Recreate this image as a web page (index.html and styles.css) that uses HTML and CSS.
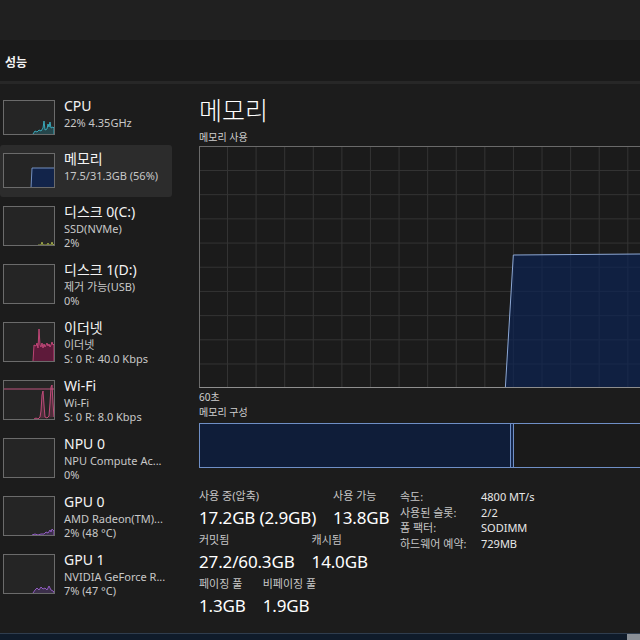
FILE: index.html
```html
<!DOCTYPE html>
<html lang="ko">
<head>
<meta charset="utf-8">
<title>작업 관리자 - 성능</title>
<link rel="stylesheet" href="styles.css">
</head>
<body>
<div class="titlebar"></div>
<div class="header"><span class="header-title">성능</span></div>
<div class="main">
  <nav class="sidebar">
    <div class="item i2">
      <div class="thumb t2">
        <svg viewBox="0 0 50 33" preserveAspectRatio="none"><polyline class="cpu" points="29,33 31,30 33,31 35,29 37,30 39,27 40,20 41,29 43,28 44,23 45,26 46,21 47,27 49,26 50,27 50,33"/></svg>
      </div>
      <div class="text"><div class="title">CPU</div><div class="sub">22% 4.35GHz</div></div>
    </div>
    <div class="item i2 selected">
      <div class="thumb t2">
        <svg viewBox="0 0 50 33" preserveAspectRatio="none"><polygon class="mem" points="27,34 28,14 51,14 51,34"/></svg>
      </div>
      <div class="text"><div class="title">메모리</div><div class="sub">17.5/31.3GB (56%)</div></div>
    </div>
    <div class="item i3">
      <div class="thumb t3">
        <svg viewBox="0 0 50 38" preserveAspectRatio="none"><polyline class="disk" points="34,38 37,38 38,35 39,38 43,38 44,36 45,38 47,38 48,35 49,38 50,37"/></svg>
      </div>
      <div class="text"><div class="title">디스크 0(C:)</div><div class="sub">SSD(NVMe)</div><div class="sub">2%</div></div>
    </div>
    <div class="item i3">
      <div class="thumb t3"></div>
      <div class="text"><div class="title">디스크 1(D:)</div><div class="sub">제거 가능(USB)</div><div class="sub">0%</div></div>
    </div>
    <div class="item i3">
      <div class="thumb t3">
        <svg viewBox="0 0 50 38" preserveAspectRatio="none"><polyline class="eth" points="29,38 30,22 32,23 33,20 34,25 35,6 36,22 37,24 38,20 39,25 40,21 41,24 42,22 43,20 44,23 45,21 46,24 47,22 48,19 49,22 50,21 50,38"/></svg>
      </div>
      <div class="text"><div class="title">이더넷</div><div class="sub">이더넷</div><div class="sub">S: 0 R: 40.0 Kbps</div></div>
    </div>
    <div class="item i3">
      <div class="thumb t3">
        <svg viewBox="0 0 50 38" preserveAspectRatio="none"><line class="wifi-line" x1="0" y1="8" x2="50" y2="8"/><polyline class="wifi" points="30,38 32,37 34,38 36,36 37,30 38,14 39,10 40,24 41,36 43,37 45,35 46,22 47,6 48,4 49,22 50,36"/></svg>
      </div>
      <div class="text"><div class="title">Wi-Fi</div><div class="sub">Wi-Fi</div><div class="sub">S: 0 R: 8.0 Kbps</div></div>
    </div>
    <div class="item i3">
      <div class="thumb t3"></div>
      <div class="text"><div class="title">NPU 0</div><div class="sub">NPU Compute Ac...</div><div class="sub">0%</div></div>
    </div>
    <div class="item i3">
      <div class="thumb t3">
        <svg viewBox="0 0 50 38" preserveAspectRatio="none"><polyline class="gpu" points="28,38 31,37 34,38 37,37 40,37 42,35 44,36 46,33 47,35 48,32 50,34 50,38"/></svg>
      </div>
      <div class="text"><div class="title">GPU 0</div><div class="sub">AMD Radeon(TM)...</div><div class="sub">2% (48 °C)</div></div>
    </div>
    <div class="item i3">
      <div class="thumb t3">
        <svg viewBox="0 0 50 38" preserveAspectRatio="none"><polyline class="gpu" points="29,38 31,35 33,33 35,35 37,32 39,34 41,33 43,35 45,31 47,35 49,36 50,37 50,38"/></svg>
      </div>
      <div class="text"><div class="title">GPU 1</div><div class="sub">NVIDIA GeForce R...</div><div class="sub">7% (47 °C)</div></div>
    </div>
  </nav>

  <section class="panel">
    <h1 class="panel-title">메모리</h1>
    <div class="caption first">메모리 사용</div>
    <div class="graph">
      <svg viewBox="0 0 460 240" preserveAspectRatio="none"><polygon class="usage" points="306,241 314,108 441,107 461,106 461,241"/></svg>
    </div>
    <div class="caption">60초</div>
    <div class="caption">메모리 구성</div>
    <div class="compbar">
      <div class="seg used"></div>
      <div class="seg modified"></div>
      <div class="seg rest"></div>
    </div>
    <div class="stats">
      <div class="left-stats">
        <div class="row">
          <div class="cell"><div class="label">사용 중(압축)</div><div class="value">17.2GB (2.9GB)</div></div>
          <div class="cell"><div class="label">사용 가능</div><div class="value">13.8GB</div></div>
        </div>
        <div class="row">
          <div class="cell"><div class="label">커밋됨</div><div class="value">27.2/60.3GB</div></div>
          <div class="cell"><div class="label">캐시됨</div><div class="value">14.0GB</div></div>
        </div>
        <div class="row">
          <div class="cell"><div class="label">페이징 풀</div><div class="value">1.3GB</div></div>
          <div class="cell"><div class="label">비페이징 풀</div><div class="value">1.9GB</div></div>
        </div>
      </div>
      <dl class="props">
        <dt>속도:</dt><dd>4800 MT/s</dd>
        <dt>사용된 슬롯:</dt><dd>2/2</dd>
        <dt>폼 팩터:</dt><dd>SODIMM</dd>
        <dt>하드웨어 예약:</dt><dd>729MB</dd>
      </dl>
    </div>
  </section>
</div>
<div class="taskbar"><div class="corner"></div></div>
</body>
</html>
```

FILE: styles.css
```css
* { box-sizing: border-box; }
html, body { margin: 0; padding: 0; }
body {
  width: 640px;
  height: 640px;
  overflow: hidden;
  background: #1c1c1c;
  color: #ffffff;
  font-family: "Noto Sans", "Noto Sans CJK KR", sans-serif;
  display: flex;
  flex-direction: column;
}
.titlebar { height: 40px; background: #202020; flex: none; }
.header {
  height: 44px;
  flex: none;
  background: #1a1a1a;
  border-bottom: 3px solid #272727;
  display: flex;
  align-items: center;
  padding-left: 5px;
  padding-top: 3px;
}
.header-title { font-size: 12px; font-weight: 700; color: #f2f2f2; }
.main { flex: 1; display: flex; min-height: 0; }

.sidebar {
  width: 180px;
  flex: none;
  padding-top: 8px;
  display: flex;
  flex-direction: column;
  gap: 1px;
}
.item {
  width: 172px;
  flex: none;
  display: flex;
  align-items: flex-start;
  padding: 8px 0 0 3px;
  gap: 9px;
  border-radius: 3px;
}
.item.i2 { height: 52px; }
.item.i3 { height: 57px; }
.item.selected { background: #2c2c2c; }
.thumb {
  width: 52px;
  flex: none;
  border: 1px solid #6b6b6b;
  background: #252525;
  overflow: hidden;
}
.thumb.t2 { height: 35px; }
.thumb.t3 { height: 40px; }
.thumb svg { display: block; width: 100%; height: 100%; }
.cpu { fill: rgba(40,170,190,0.25); stroke: #3bb3c6; stroke-width: 0.9; }
.mem { fill: #12244a; stroke: #7d9ccf; stroke-width: 0.9; }
.disk { fill: none; stroke: #a6b04a; stroke-width: 0.9; }
.eth { fill: #5e1a3a; stroke: #c94a7d; stroke-width: 0.9; }
.wifi { fill: rgba(200,70,120,0.25); stroke: #cf4f82; stroke-width: 0.9; }
.wifi-line { stroke: #cf5a88; stroke-width: 0.9; }
.gpu { fill: rgba(130,80,190,0.25); stroke: #9a62cf; stroke-width: 0.9; }

.text { margin-top: -4px; min-width: 0; }
.title { font-size: 14px; line-height: 19px; color: #f4f4f4; white-space: nowrap; }
.sub { font-size: 11px; line-height: 15px; color: #c8c8c8; white-space: nowrap; }
.sub + .sub { margin-top: -1px; }

.panel {
  flex: none;
  width: 480px;
  padding: 11px 0 0 19px;
}
.panel-title {
  margin: 0;
  font-size: 25px;
  line-height: 30px;
  font-weight: 300;
  color: #ffffff;
}
.caption { font-size: 10px; line-height: 14px; color: #cfcfcf; margin-top: 1px; }
.caption.first { margin-top: 5px; }
.graph {
  margin-top: 2px;
  width: 461px;
  height: 242px;
  border: 1px solid #6a6a6a;
  border-bottom-color: #8e8e8e;
  background-color: #1b1b1b;
  background-image:
    linear-gradient(to right, #333333 1px, transparent 1px),
    linear-gradient(to bottom, #333333 1px, transparent 1px);
  background-size: 28.6px 24.2px;
  background-position: 27px 23px;
}
.graph + .caption { margin-top: 2px; }
.graph svg { display: block; width: 100%; height: 100%; }
.usage { fill: rgba(12,36,84,0.68); stroke: #8ea9d6; stroke-width: 1; }

.compbar {
  margin-top: 4px;
  width: 461px;
  height: 45px;
  display: flex;
  border: 1px solid #6f8fc6;
}
.seg { height: 100%; }
.seg.used { width: 311px; background: #0f1d39; border-right: 1px solid #6f8fc6; }
.seg.modified { width: 3px; background: #15264a; border-right: 1px solid #6f8fc6; }
.seg.rest { flex: 1; background: #1a1a1a; }

.stats { margin-top: 20px; display: flex; align-items: flex-start; }
.left-stats { width: 201px; flex: none; }
.row { display: flex; gap: 17px; }
.label { font-size: 11px; line-height: 16px; color: #c6c6c6; white-space: nowrap; }
.value { font-size: 17px; line-height: 28px; color: #ffffff; white-space: nowrap; letter-spacing: -0.15px; }
.props {
  margin: 1px 0 0 0;
  display: grid;
  grid-template-columns: 81px auto;
  font-size: 11px;
  line-height: 15.5px;
}
.props dt { color: #c6c6c6; white-space: nowrap; }
.props dd { margin: 0; color: #e8e8e8; white-space: nowrap; }

.taskbar {
  height: 7px;
  flex: none;
  background: #0f1b2a;
  border-top: 1px solid #2f3d4e;
  display: flex;
  justify-content: flex-end;
}
.corner { width: 13px; background: #8a8f96; }
```
